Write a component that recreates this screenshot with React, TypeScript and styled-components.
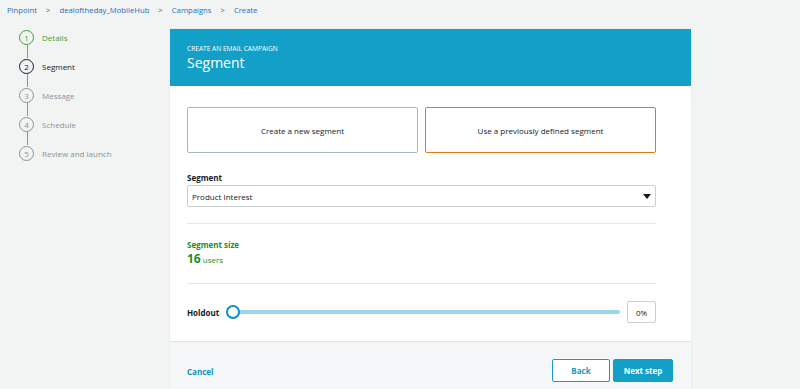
import React from 'react'
import styled, { createGlobalStyle } from 'styled-components'

const Global = createGlobalStyle`
  body {
    margin: 0;
    background: #f2f3f3;
    font-family: "Open Sans", "Noto Sans", Arial, sans-serif;
    color: #16191f;
  }
`

const Page = styled.div`
  width: 800px;
  height: 389px;
  overflow: hidden;
`

const Crumbs = styled.nav`
  display: flex;
  align-items: center;
  height: 19px;
  padding-left: 7px;
  font-size: 7.7px;
  color: #2a6ebb;
  gap: 8px;
`

const Sep = styled.span`
  color: #545b64;
  margin: 0 1px;
`

const Main = styled.div`
  display: flex;
  margin-top: 10px;
`

const Steps = styled.ol`
  list-style: none;
  margin: 0;
  padding: 0 0 0 19px;
  width: 151px;
`

const Step = styled.li<{ $state: 'done' | 'active' | 'todo' }>`
  display: flex;
  flex-direction: column;
  color: ${p => (p.$state === 'done' ? '#3d9f3d' : p.$state === 'active' ? '#16191f' : '#879596')};
`

const StepHead = styled.div`
  display: flex;
  align-items: center;
  gap: 8px;
  font-size: 8px;
  height: 16px;
`

const Circle = styled.span`
  width: 13px;
  height: 13px;
  border-radius: 50%;
  border: 1.5px solid currentColor;
  display: flex;
  align-items: center;
  justify-content: center;
  font-size: 8px;
  flex-shrink: 0;
`

const Line = styled.span`
  width: 1px;
  height: 13px;
  margin-left: 8px;
  background: #879596;
`

const Card = styled.section`
  width: 521px;
  background: #fff;
  box-shadow: 0 0 1px rgba(0, 0, 0, 0.15);
`

const Header = styled.header`
  background: #12a0c9;
  height: 57px;
  box-sizing: border-box;
  padding: 15px 17px 0;
  color: #fff;
`

const Kicker = styled.div`
  font-size: 6.6px;
  line-height: 9px;
`

const Title = styled.h1`
  margin: 0;
  font-size: 14px;
  font-weight: 400;
  line-height: 19px;
`

const Body = styled.div`
  padding: 21px 35px 0 17px;
  height: 234px;
`

const Choices = styled.div`
  display: grid;
  grid-template-columns: 1fr 1fr;
  gap: 7px;
`

const Tile = styled.button<{ $selected?: boolean }>`
  height: 46px;
  background: #fff;
  border: 1px solid ${p => (p.$selected ? '#e07b14' : '#a9b6bd')};
  border-radius: 2px;
  font-family: inherit;
  font-size: 8px;
  color: #16191f;
`

const Label = styled.div`
  margin-top: 19px;
  font-size: 8px;
  font-weight: 700;
  margin-bottom: 2px;
`

const Select = styled.div`
  height: 20px;
  border: 1px solid #c9d0d4;
  border-radius: 2px;
  display: flex;
  align-items: center;
  justify-content: space-between;
  padding: 0 4px;
  font-size: 8px;
`

const Caret = styled.span`
  width: 0;
  height: 0;
  border-left: 4px solid transparent;
  border-right: 4px solid transparent;
  border-top: 5px solid #16191f;
`

const Divider = styled.hr<{ $top?: number }>`
  border: 0;
  border-top: 1px solid #e3e7e9;
  margin: ${p => p.$top ?? 0}px 0 0;
`

const Size = styled.div`
  padding: 15px 0 16px;
  color: #1e8c2d;
`

const SizeLabel = styled.div`
  font-size: 8px;
  line-height: 12px;
  font-weight: 700;
`

const SizeValue = styled.div`
  font-size: 8px;
  line-height: 15px;
  b {
    font-size: 12px;
    font-weight: 700;
    margin-right: 2px;
  }
`

const HoldRow = styled.div`
  display: flex;
  align-items: center;
  margin-top: 17px;
  gap: 7px;
`

const HoldLabel = styled.span`
  font-size: 8px;
  font-weight: 700;
  width: 38px;
`

const Track = styled.div`
  flex: 1;
  height: 4px;
  border-radius: 2px;
  background: #9ad7e8;
  position: relative;
`

const Thumb = styled.span`
  position: absolute;
  left: -6px;
  top: -5px;
  width: 10px;
  height: 10px;
  border-radius: 50%;
  background: #fff;
  border: 2px solid #0c8fbf;
`

const Value = styled.div`
  width: 27px;
  height: 20px;
  border: 1px solid #c9d0d4;
  border-radius: 2px;
  display: flex;
  align-items: center;
  justify-content: center;
  font-size: 8px;
`

const Footer = styled.footer`
  background: #f5f6f7;
  border-top: 1px solid #e1e5e8;
  height: 60px;
  padding: 0 18px 0 17px;
  display: flex;
  align-items: flex-start;
  justify-content: space-between;
`

const Cancel = styled.a`
  color: #0f91c0;
  font-size: 8px;
  font-weight: 700;
  margin-top: 24px;
`

const Buttons = styled.div`
  display: flex;
  gap: 3px;
  margin-top: 17px;
`

const Btn = styled.button<{ $primary?: boolean }>`
  height: 23px;
  border-radius: 2px;
  font-family: inherit;
  font-size: 8px;
  font-weight: 700;
  border: 1px solid ${p => (p.$primary ? '#12a0c9' : '#1a9ac6')};
  background: ${p => (p.$primary ? '#12a0c9' : '#fff')};
  color: ${p => (p.$primary ? '#fff' : '#1a9ac6')};
  width: ${p => (p.$primary ? '60px' : '58px')};
`

const steps: { n: number; label: string; state: 'done' | 'active' | 'todo' }[] = [
  { n: 1, label: 'Details', state: 'done' },
  { n: 2, label: 'Segment', state: 'active' },
  { n: 3, label: 'Message', state: 'todo' },
  { n: 4, label: 'Schedule', state: 'todo' },
  { n: 5, label: 'Review and launch', state: 'todo' },
]

const App: React.FC = () => {
  return (
    <Page>
      <Global />
      <Crumbs>
        <span>Pinpoint</span>
        <Sep>&gt;</Sep>
        <span>dealoftheday_MobileHub</span>
        <Sep>&gt;</Sep>
        <span>Campaigns</span>
        <Sep>&gt;</Sep>
        <span>Create</span>
      </Crumbs>
      <Main>
        <Steps>
          {steps.map((s, i) => (
            <Step key={s.n} $state={s.state}>
              <StepHead>
                <Circle>{s.n}</Circle>
                {s.label}
              </StepHead>
              {i < steps.length - 1 && <Line />}
            </Step>
          ))}
        </Steps>
        <Card>
          <Header>
            <Kicker>CREATE AN EMAIL CAMPAIGN</Kicker>
            <Title>Segment</Title>
          </Header>
          <Body>
            <Choices>
              <Tile>Create a new segment</Tile>
              <Tile $selected>Use a previously defined segment</Tile>
            </Choices>
            <Label>Segment</Label>
            <Select>
              Product Interest
              <Caret />
            </Select>
            <Divider $top={16} />
            <Size>
              <SizeLabel>Segment size</SizeLabel>
              <SizeValue>
                <b>16</b>users
              </SizeValue>
            </Size>
            <Divider />
            <HoldRow>
              <HoldLabel>Holdout</HoldLabel>
              <Track>
                <Thumb />
              </Track>
              <Value>0%</Value>
            </HoldRow>
          </Body>
          <Footer>
            <Cancel>Cancel</Cancel>
            <Buttons>
              <Btn>Back</Btn>
              <Btn $primary>Next step</Btn>
            </Buttons>
          </Footer>
        </Card>
      </Main>
    </Page>
  )
}

export default App
